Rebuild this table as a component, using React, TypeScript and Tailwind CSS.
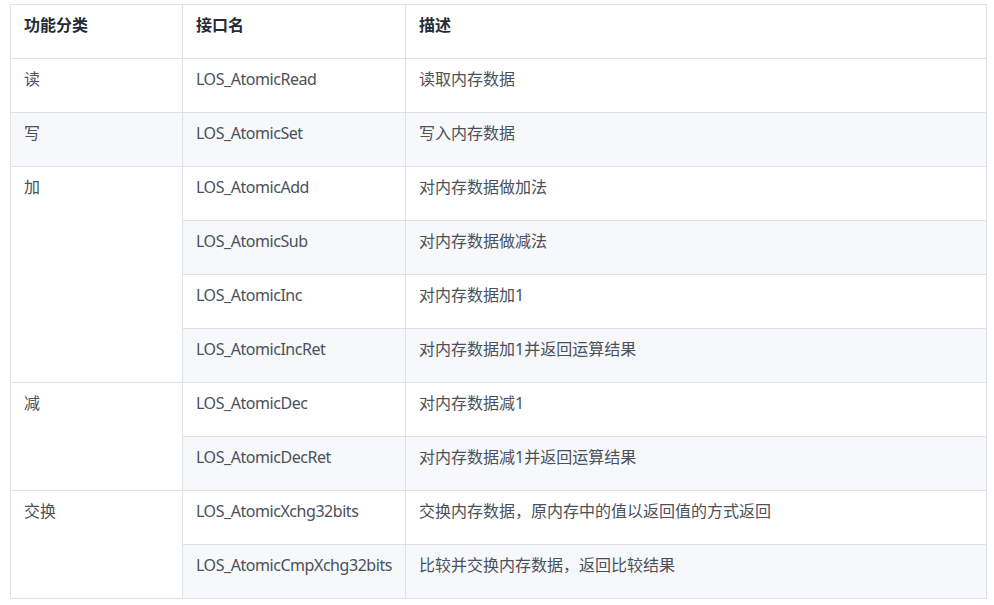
import React from 'react';

type Row = { group?: string; span?: number; api: string; desc: string; shade: boolean };

const rows: Row[] = [
  { group: '读', span: 1, api: 'LOS_AtomicRead', desc: '读取内存数据', shade: false },
  { group: '写', span: 1, api: 'LOS_AtomicSet', desc: '写入内存数据', shade: true },
  { group: '加', span: 4, api: 'LOS_AtomicAdd', desc: '对内存数据做加法', shade: false },
  { api: 'LOS_AtomicSub', desc: '对内存数据做减法', shade: true },
  { api: 'LOS_AtomicInc', desc: '对内存数据加1', shade: false },
  { api: 'LOS_AtomicIncRet', desc: '对内存数据加1并返回运算结果', shade: true },
  { group: '减', span: 2, api: 'LOS_AtomicDec', desc: '对内存数据减1', shade: false },
  { api: 'LOS_AtomicDecRet', desc: '对内存数据减1并返回运算结果', shade: true },
  { group: '交换', span: 2, api: 'LOS_AtomicXchg32bits', desc: '交换内存数据，原内存中的值以返回值的方式返回', shade: false },
  { api: 'LOS_AtomicCmpXchg32bits', desc: '比较并交换内存数据，返回比较结果', shade: true },
];

const cell = 'border border-[#dfe2e5] align-top h-[54px] px-[13px] pt-[8px] leading-[24px]';

export default function App() {
  return (
    <div className="min-h-[605px] bg-white pl-[10px] pt-[4px] font-['Noto_Sans','Noto_Sans_CJK_SC',sans-serif] text-[16px]">
      <table className="w-[977px] table-fixed border-collapse text-left">
        <thead>
          <tr>
            <th className={`${cell} w-[172px] font-semibold text-[#262b36]`}>功能分类</th>
            <th className={`${cell} w-[223px] font-semibold text-[#262b36]`}>接口名</th>
            <th className={`${cell} font-semibold text-[#262b36]`}>描述</th>
          </tr>
        </thead>
        <tbody className="text-[#4b505a]">
          {rows.map((r) => (
            <tr key={r.api} className={r.shade ? 'bg-[#f6f8fa]' : 'bg-white'}>
              {r.group && (
                <td rowSpan={r.span} className={`${cell} ${r.shade ? 'bg-[#f6f8fa]' : 'bg-white'}`}>
                  {r.group}
                </td>
              )}
              <td className={`${cell} tracking-[-0.45px]`}>{r.api}</td>
              <td className={cell}>{r.desc}</td>
            </tr>
          ))}
        </tbody>
      </table>
    </div>
  );
}
